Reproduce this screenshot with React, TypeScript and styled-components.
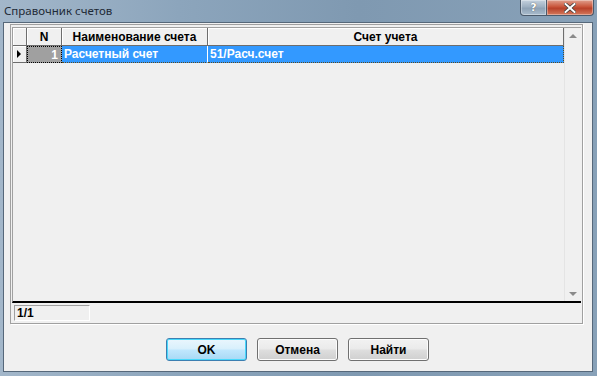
import styled, { createGlobalStyle } from "styled-components";

const GlobalStyle = createGlobalStyle`
  html, body {
    margin: 0;
    padding: 0;
    background: #ffffff;
  }
  * {
    box-sizing: border-box;
  }
`;

const Window = styled.div`
  width: 597px;
  height: 376px;
  display: flex;
  flex-direction: column;
  background: linear-gradient(90deg, #a3b7ca 0%, #8ca5bc 30%, #7f99b1 60%, #88a1b8 100%);
  padding: 0 4px 4px 3px;
  overflow: hidden;
  position: relative;
`;

const TitleBar = styled.div`
  height: 22px;
  flex: none;
  display: flex;
  align-items: center;
  padding-left: 1px;
  padding-bottom: 1px;
  font-family: "Noto Sans", "Open Sans", sans-serif;
  font-size: 11.5px;
  color: #1e2a36;
`;

const TitleButtons = styled.div`
  position: absolute;
  top: 0;
  right: 3px;
  display: flex;
  height: 16px;
`;

const CaptionButton = styled.div<{ $close?: boolean }>`
  width: ${(p) => (p.$close ? "47px" : "27px")};
  height: 16px;
  display: flex;
  align-items: center;
  justify-content: center;
  border: 1px solid #4b5a6b;
  border-top: none;
  border-left: ${(p) => (p.$close ? "none" : "1px solid #4b5a6b")};
  border-radius: ${(p) => (p.$close ? "0 0 4px 0" : "0 0 0 4px")};
  background: ${(p) =>
    p.$close
      ? "linear-gradient(180deg, #e0a08e 0%, #c9553b 45%, #b8412a 55%, #d47a5d 100%)"
      : "linear-gradient(180deg, #c4d1de 0%, #9eb0c2 45%, #8ea2b6 55%, #a9bccd 100%)"};
  box-shadow: inset 0 0 0 1px rgba(255, 255, 255, 0.35);
`;

const Client = styled.div`
  flex: 1;
  background: #f0f0f0;
  border: 1px solid #56687a;
  display: flex;
  flex-direction: column;
  padding: 1px 9px 0 6px;
`;

const Panel = styled.div`
  height: 300px;
  border: 1px solid #a0a0a0;
  box-shadow: 1px 1px 0 #ffffff;
  display: flex;
  flex-direction: column;
  padding: 2px 1px 0 1px;
`;

const Grid = styled.div`
  flex: 1;
  display: flex;
  border-top: 1px solid #a0a0a0;
  border-left: 1px solid #a0a0a0;
  border-bottom: 2px solid #000000;
  background: #f0f0f0;
`;

const Table = styled.div`
  flex: 1;
  display: flex;
  flex-direction: column;
`;

const Row = styled.div`
  display: flex;
  height: 18px;
`;

const HeaderCell = styled.div<{ $w?: number }>`
  width: ${(p) => (p.$w ? `${p.$w}px` : "auto")};
  flex: ${(p) => (p.$w ? "none" : "1")};
  display: flex;
  align-items: center;
  justify-content: center;
  background: #f0f0f0;
  border-right: 1px solid #6d6d6d;
  border-bottom: 1px solid #6d6d6d;
  box-shadow: inset 1px 1px 0 #ffffff;
  font-family: "Liberation Sans", Arial, sans-serif;
  font-weight: bold;
  font-size: 12px;
  color: #000;
  padding-top: 1px;
`;

const DataRow = styled.div`
  display: flex;
  height: 17px;
`;

const IndicatorCell = styled.div`
  width: 14px;
  flex: none;
  display: flex;
  align-items: center;
  justify-content: center;
  background: #f0f0f0;
  border-right: 1px solid #6d6d6d;
  border-bottom: 1px solid #6d6d6d;
  box-shadow: inset 1px 1px 0 #ffffff;
`;

const Arrow = styled.div`
  width: 0;
  height: 0;
  border-top: 4px solid transparent;
  border-bottom: 4px solid transparent;
  border-left: 4px solid #000;
  margin-left: -2px;
`;

const NumCell = styled.div`
  width: 35px;
  flex: none;
  display: flex;
  align-items: center;
  justify-content: flex-end;
  padding-right: 3px;
  background: #a0a0a0;
  border: 1px dotted #000;
  color: #ffffff;
  font-family: "Liberation Sans", Arial, sans-serif;
  font-weight: bold;
  font-size: 12px;
`;

const DataCell = styled.div<{ $w?: number }>`
  width: ${(p) => (p.$w ? `${p.$w}px` : "auto")};
  flex: ${(p) => (p.$w ? "none" : "1")};
  display: flex;
  align-items: center;
  padding-left: 2px;
  background: #3399ff;
  border-right: 1px solid #ffffff;
  border-bottom: 1px dotted #5a4a20;
  color: #ffffff;
  font-family: "Liberation Sans", Arial, sans-serif;
  font-weight: bold;
  font-size: 12px;
  white-space: nowrap;
  overflow: hidden;
`;

const LastCell = styled(DataCell)`
  border-right: 1px dotted #5a4a20;
`;

const ScrollBar = styled.div`
  width: 17px;
  flex: none;
  display: flex;
  flex-direction: column;
  justify-content: space-between;
  align-items: center;
  background: #f0f0f0;
  border-left: 1px solid #e4e4e4;
  padding: 6px 0 5px;
`;

const ScrollArrow = styled.div<{ $down?: boolean }>`
  width: 0;
  height: 0;
  border-left: 4px solid transparent;
  border-right: 4px solid transparent;
  ${(p) =>
    p.$down ? "border-top: 4px solid #8a8a8a;" : "border-bottom: 4px solid #8a8a8a;"}
`;

const StatusBar = styled.div`
  height: 20px;
  flex: none;
  display: flex;
  align-items: center;
  padding-left: 2px;
`;

const StatusField = styled.div`
  width: 76px;
  height: 16px;
  border-top: 1px solid #a0a0a0;
  border-left: 1px solid #a0a0a0;
  border-right: 1px solid #ffffff;
  border-bottom: 1px solid #ffffff;
  display: flex;
  align-items: center;
  padding-left: 2px;
  font-family: "Liberation Sans", Arial, sans-serif;
  font-weight: bold;
  font-size: 12px;
  color: #000;
`;

const ButtonBar = styled.div`
  flex: 1;
  display: flex;
  justify-content: center;
  align-items: center;
  gap: 10px;
  padding: 4px 0 0 2px;
`;

const Button = styled.div<{ $focused?: boolean }>`
  width: 81px;
  height: 23px;
  display: flex;
  align-items: center;
  justify-content: center;
  border-radius: 3px;
  border: 1px solid ${(p) => (p.$focused ? "#3c7fb1" : "#707070")};
  background: ${(p) =>
    p.$focused
      ? "linear-gradient(180deg, #eaf6fd 0%, #d9f0fc 45%, #bee6fd 55%, #a7d9f5 100%)"
      : "linear-gradient(180deg, #f2f2f2 0%, #ebebeb 45%, #dddddd 55%, #cfcfcf 100%)"};
  box-shadow: inset 0 0 0 1px ${(p) => (p.$focused ? "#48d8fb" : "#fcfcfc")};
  font-family: "Liberation Sans", Arial, sans-serif;
  font-weight: bold;
  font-size: 12px;
  color: #000;
`;

const QuestionGlyph = styled.span`
  font-family: "DejaVu Sans", sans-serif;
  font-weight: bold;
  font-size: 11px;
  color: #ffffff;
  text-shadow: 0 0 1px #333;
`;

const App = () => {
  return (
    <>
      <GlobalStyle />
      <Window>
        <TitleBar>Справочник счетов</TitleBar>
        <TitleButtons>
          <CaptionButton>
            <QuestionGlyph>?</QuestionGlyph>
          </CaptionButton>
          <CaptionButton $close>
            <svg width="12" height="10" viewBox="0 0 12 10">
              <path
                d="M1.5 1 L10.5 9 M10.5 1 L1.5 9"
                stroke="#3a3a3a"
                strokeWidth="3.4"
                strokeLinecap="square"
              />
              <path
                d="M1.5 1 L10.5 9 M10.5 1 L1.5 9"
                stroke="#ffffff"
                strokeWidth="2"
                strokeLinecap="square"
              />
            </svg>
          </CaptionButton>
        </TitleButtons>
        <Client>
          <Panel>
            <Grid>
              <Table>
                <Row>
                  <HeaderCell $w={14} />
                  <HeaderCell $w={35}>N</HeaderCell>
                  <HeaderCell $w={146}>Наименование счета</HeaderCell>
                  <HeaderCell>Счет учета</HeaderCell>
                </Row>
                <DataRow>
                  <IndicatorCell>
                    <Arrow />
                  </IndicatorCell>
                  <NumCell>1</NumCell>
                  <DataCell $w={146}>Расчетный счет</DataCell>
                  <LastCell>51/Расч.счет</LastCell>
                </DataRow>
              </Table>
              <ScrollBar>
                <ScrollArrow />
                <ScrollArrow $down />
              </ScrollBar>
            </Grid>
            <StatusBar>
              <StatusField>1/1</StatusField>
            </StatusBar>
          </Panel>
          <ButtonBar>
            <Button $focused>OK</Button>
            <Button>Отмена</Button>
            <Button>Найти</Button>
          </ButtonBar>
        </Client>
      </Window>
    </>
  );
};

export default App;
